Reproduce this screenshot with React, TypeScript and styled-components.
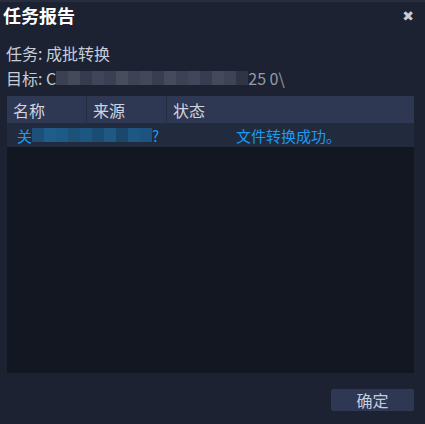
import React from 'react'
import styled, { createGlobalStyle } from 'styled-components'

const GlobalStyle = createGlobalStyle`
  html, body {
    margin: 0;
    padding: 0;
    background: #1c2232;
  }
  body {
    font-family: "Noto Sans CJK SC", "Noto Sans", sans-serif;
  }
`

const Dialog = styled.div`
  width: 425px;
  height: 424px;
  box-sizing: border-box;
  background: #1c2232;
  border-top: 2px solid #262d3e;
  display: flex;
  flex-direction: column;
  overflow: hidden;
`

const TitleBar = styled.div`
  height: 26px;
  display: flex;
  align-items: center;
  justify-content: space-between;
  padding: 0 11px 0 3px;
`

const Title = styled.div`
  color: #ffffff;
  font-size: 18px;
  font-weight: 700;
  line-height: 1;
`

const Close = styled.div`
  color: #c9cdd8;
  font-family: "DejaVu Sans", sans-serif;
  font-size: 14px;
  font-weight: 700;
  line-height: 1;
  margin-top: 2px;
`

const Info = styled.div`
  padding: 15px 0 0 6px;
  display: flex;
  flex-direction: column;
  gap: 5px;
`

const InfoLine = styled.div`
  color: #c8ccd6;
  font-size: 16px;
  line-height: 20px;
  height: 20px;
  display: flex;
  align-items: center;
  white-space: nowrap;
`

const Mosaic = styled.span`
  display: inline-flex;
  height: 14px;
`

const Block = styled.span<{ $c: string; $w?: number }>`
  display: inline-block;
  width: ${(p) => p.$w ?? 12}px;
  height: 100%;
  background: ${(p) => p.$c};
`

const Faded = styled.span`
  opacity: 0.7;
`

const Table = styled.div`
  margin: 8px 11px 0 7px;
  height: 277px;
  background: #131722;
  display: flex;
  flex-direction: column;
`

const HeaderRow = styled.div`
  height: 27px;
  background: #2e3853;
  display: grid;
  grid-template-columns: 80px 80px 1fr;
`

const HeaderCell = styled.div<{ $last?: boolean }>`
  color: #cfd4e0;
  font-size: 16px;
  display: flex;
  align-items: center;
  padding-left: 6px;
  border-right: ${(p) => (p.$last ? 'none' : '1px solid #242c42')};
`

const DataRow = styled.div`
  height: 24px;
  background: #222a3e;
  display: flex;
  align-items: center;
  color: #1a9bf0;
  font-size: 15px;
  white-space: nowrap;
`

const NameCell = styled.div`
  width: 160px;
  display: flex;
  align-items: center;
  padding-left: 10px;
  box-sizing: border-box;
`

const StatusCell = styled.div`
  padding-left: 69px;
`

const Footer = styled.div`
  flex: 1;
  display: flex;
  justify-content: flex-end;
  align-items: flex-start;
  padding: 16px 11px 0 0;
`

const Button = styled.button`
  width: 83px;
  height: 22px;
  border: none;
  border-radius: 2px;
  background: #2e3853;
  color: #c3cbdd;
  font-family: "Noto Sans CJK SC", sans-serif;
  font-size: 16px;
  line-height: 22px;
  padding: 0;
`

const grayBlocks = [
  '#3b4152', '#444a5a', '#363c4d', '#40465a', '#3a4051', '#474d5d', '#3d4354',
  '#424859', '#383e4f', '#454b5c', '#3c4253', '#40475a', '#373d4e', '#434a5b',
  '#3e4455', '#2f3546',
]

const blueBlocks = [
  '#1d5078', '#1f5d8a', '#1e5a86', '#1c5178', '#1d5680', '#1b4d74', '#1e5883',
  '#1a476c', '#1e5784', '#1d5380',
]

export default function App() {
  return (
    <>
      <GlobalStyle />
      <Dialog>
        <TitleBar>
          <Title>任务报告</Title>
          <Close>✖</Close>
        </TitleBar>
        <Info>
          <InfoLine>任务: 成批转换</InfoLine>
          <InfoLine>
            目标: C
            <Mosaic>
              {grayBlocks.map((c, i) => (
                <Block key={i} $c={c} />
              ))}
            </Mosaic>
            <Faded>25 0\</Faded>
          </InfoLine>
        </Info>
        <Table>
          <HeaderRow>
            <HeaderCell>名称</HeaderCell>
            <HeaderCell>来源</HeaderCell>
            <HeaderCell $last>状态</HeaderCell>
          </HeaderRow>
          <DataRow>
            <NameCell>
              关
              <Mosaic>
                {blueBlocks.map((c, i) => (
                  <Block key={i} $c={c} />
                ))}
              </Mosaic>
              ?
            </NameCell>
            <StatusCell>文件转换成功。</StatusCell>
          </DataRow>
        </Table>
        <Footer>
          <Button>确定</Button>
        </Footer>
      </Dialog>
    </>
  )
}
